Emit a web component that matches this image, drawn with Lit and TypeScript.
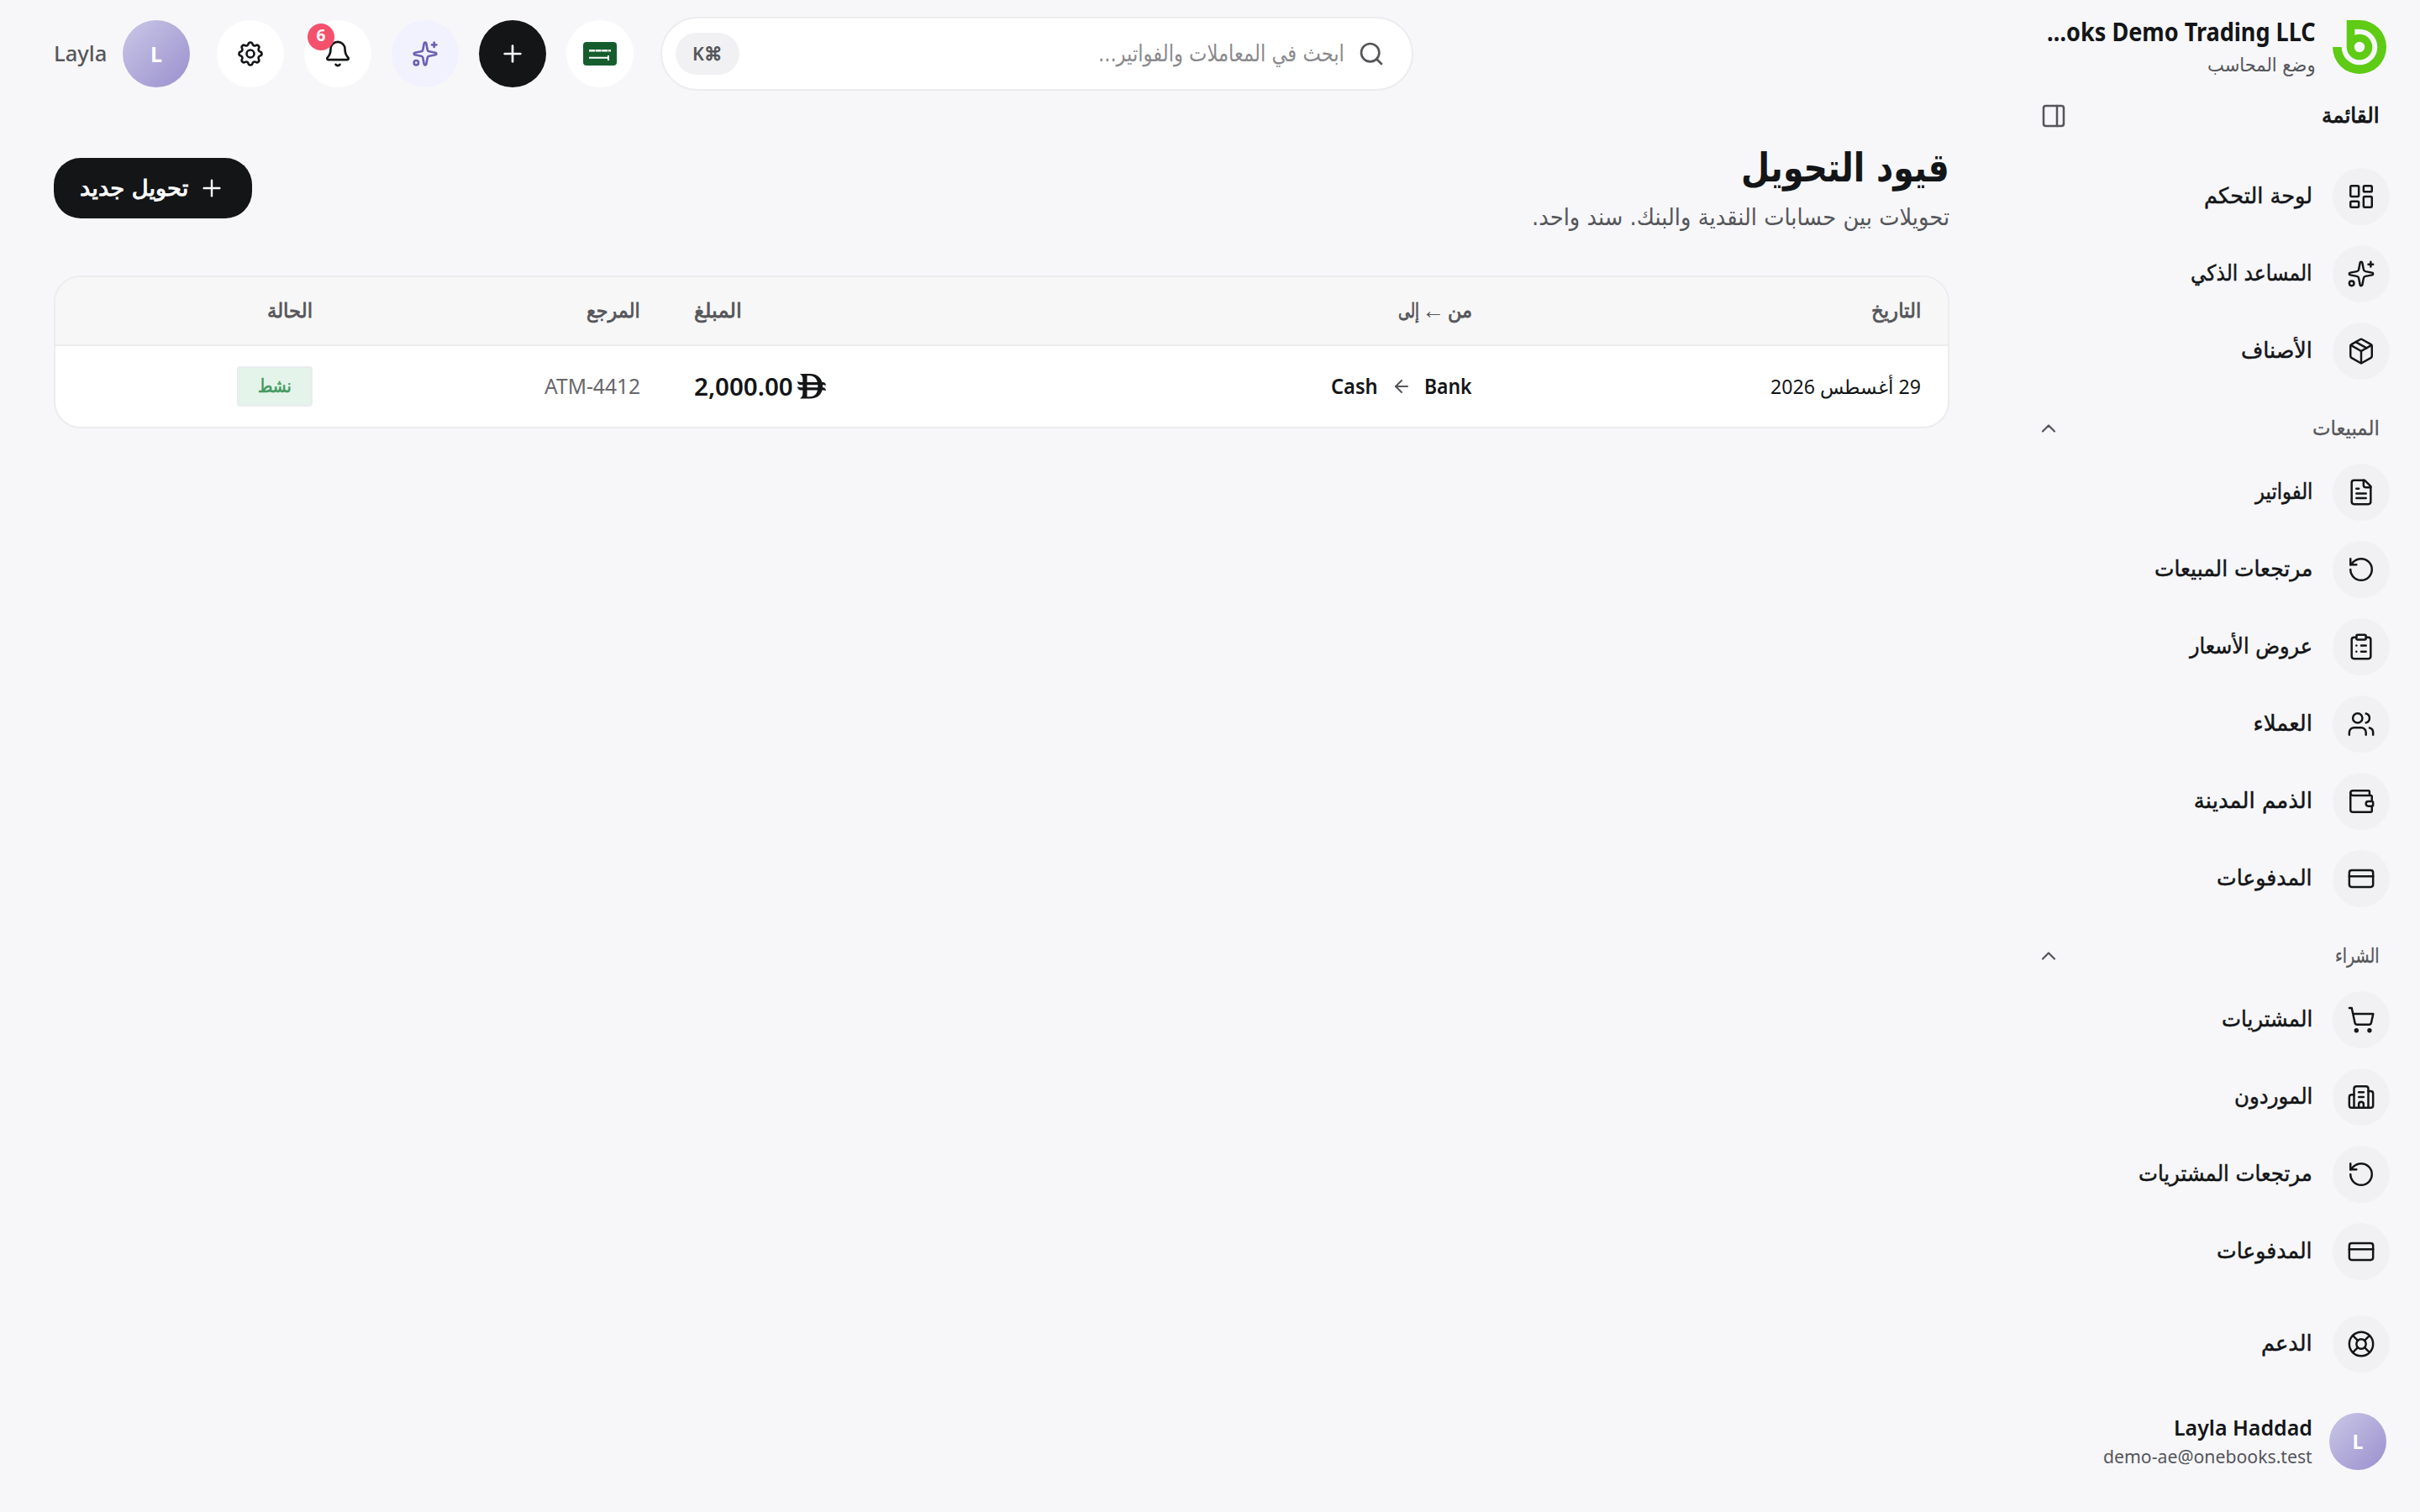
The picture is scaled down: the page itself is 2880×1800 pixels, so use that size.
import { LitElement, html, css, svg } from "lit";
import { customElement, property, query } from "lit/decorators.js";

const ICONS: Record<string, unknown> = {
  dashboard: svg`<rect x="3" y="3" width="7" height="9" rx="1"/><rect x="14" y="3" width="7" height="5" rx="1"/><rect x="14" y="12" width="7" height="9" rx="1"/><rect x="3" y="16" width="7" height="5" rx="1"/>`,
  sparkles: svg`<path d="M11.017 2.814a1 1 0 0 1 1.966 0l1.051 5.558a2 2 0 0 0 1.594 1.594l5.558 1.051a1 1 0 0 1 0 1.966l-5.558 1.051a2 2 0 0 0-1.594 1.594l-1.051 5.558a1 1 0 0 1-1.966 0l-1.051-5.558a2 2 0 0 0-1.594-1.594l-5.558-1.051a1 1 0 0 1 0-1.966l5.558-1.051a2 2 0 0 0 1.594-1.594z"/><path d="M20 2v4"/><path d="M22 4h-4"/><circle cx="4" cy="20" r="2"/>`,
  box: svg`<path d="M11 21.73a2 2 0 0 0 2 0l7-4A2 2 0 0 0 21 16V8a2 2 0 0 0-1-1.73l-7-4a2 2 0 0 0-2 0l-7 4A2 2 0 0 0 3 8v8a2 2 0 0 0 1 1.73z"/><path d="M12 22V12"/><path d="M3.29 7 12 12l8.71-5"/><path d="m7.5 4.27 9 5.15"/>`,
  file: svg`<path d="M15 2H6a2 2 0 0 0-2 2v16a2 2 0 0 0 2 2h12a2 2 0 0 0 2-2V7z"/><path d="M14 2v4a2 2 0 0 0 2 2h4"/><path d="M10 9H8"/><path d="M16 13H8"/><path d="M16 17H8"/>`,
  undo: svg`<path d="M3 12a9 9 0 1 0 9-9 9.75 9.75 0 0 0-6.74 2.74L3 8"/><path d="M3 3v5h5"/>`,
  clipboard: svg`<rect x="8" y="2" width="8" height="4" rx="1"/><path d="M16 4h2a2 2 0 0 1 2 2v14a2 2 0 0 1-2 2H6a2 2 0 0 1-2-2V6a2 2 0 0 1 2-2h2"/><path d="M12 11h4"/><path d="M12 16h4"/><path d="M8 11h.01"/><path d="M8 16h.01"/>`,
  users: svg`<path d="M16 21v-2a4 4 0 0 0-4-4H6a4 4 0 0 0-4 4v2"/><circle cx="9" cy="7" r="4"/><path d="M22 21v-2a4 4 0 0 0-3-3.87"/><path d="M16 3.13a4 4 0 0 1 0 7.75"/>`,
  wallet: svg`<path d="M19 7V4a1 1 0 0 0-1-1H5a2 2 0 0 0 0 4h15a1 1 0 0 1 1 1v4h-3a2 2 0 0 0 0 4h3a1 1 0 0 0 1-1v-2a1 1 0 0 0-1-1"/><path d="M3 5v14a2 2 0 0 0 2 2h15a1 1 0 0 0 1-1v-4"/>`,
  card: svg`<rect x="2" y="5" width="20" height="14" rx="2"/><path d="M2 10h20"/>`,
  cart: svg`<circle cx="8" cy="21" r="1"/><circle cx="19" cy="21" r="1"/><path d="M2.05 2.05h2l2.66 12.42a2 2 0 0 0 2 1.58h9.78a2 2 0 0 0 1.95-1.57l1.65-7.43H5.12"/>`,
  building: svg`<path d="M10 12h4"/><path d="M10 8h4"/><path d="M14 21v-3a2 2 0 0 0-4 0v3"/><path d="M6 10H4a2 2 0 0 0-2 2v7a2 2 0 0 0 2 2h16a2 2 0 0 0 2-2V9a2 2 0 0 0-2-2h-2"/><path d="M6 21V5a2 2 0 0 1 2-2h8a2 2 0 0 1 2 2v16"/>`,
  buoy: svg`<circle cx="12" cy="12" r="10"/><path d="m4.93 4.93 4.24 4.24"/><path d="m14.83 9.17 4.24-4.24"/><path d="m14.83 14.83 4.24 4.24"/><path d="m9.17 14.83-4.24 4.24"/><circle cx="12" cy="12" r="4"/>`,
  panel: svg`<rect x="3" y="3" width="18" height="18" rx="2"/><path d="M15 3v18"/>`,
  up: svg`<path d="m18 15-6-6-6 6"/>`,
  left: svg`<path d="m12 19-7-7 7-7"/><path d="M19 12H5"/>`,
  plus: svg`<path d="M5 12h14"/><path d="M12 5v14"/>`,
  search: svg`<circle cx="11" cy="11" r="8"/><path d="m21 21-4.34-4.34"/>`,
  bell: svg`<path d="M10.268 21a2 2 0 0 0 3.464 0"/><path d="M3.262 15.326A1 1 0 0 0 4 17h16a1 1 0 0 0 .74-1.673C19.41 13.956 18 12.499 18 8A6 6 0 0 0 6 8c0 4.499-1.411 5.956-2.738 7.326"/>`,
  gear: svg`<path d="M10.325 4.317c.426-1.756 2.924-1.756 3.35 0a1.724 1.724 0 0 0 2.573 1.066c1.543-.94 3.31.826 2.37 2.37a1.724 1.724 0 0 0 1.065 2.572c1.756.426 1.756 2.924 0 3.35a1.724 1.724 0 0 0-1.066 2.573c.94 1.543-.826 3.31-2.37 2.37a1.724 1.724 0 0 0-2.572 1.065c-.426 1.756-2.924 1.756-3.35 0a1.724 1.724 0 0 0-2.573-1.066c-1.543.94-3.31-.826-2.37-2.37a1.724 1.724 0 0 0-1.065-2.572c-1.756-.426-1.756-2.924 0-3.35a1.724 1.724 0 0 0 1.066-2.573c-.94-1.543.826-3.31 2.37-2.37 1 .608 2.296.07 2.572-1.065z"/><circle cx="12" cy="12" r="3"/>`,
};

const icon = (name: string, size = 34, stroke = 1.75) => html`<svg
  class="icon" width=${size} height=${size} viewBox="0 0 24 24" fill="none" stroke="currentColor"
  stroke-width=${stroke} stroke-linecap="round" stroke-linejoin="round">${ICONS[name]}</svg>`;

/** A single line of text condensed or widened to a given measure. */
@customElement("fit-text")
class FitText extends LitElement {
  @property({ type: Number }) w = 0;
  @property() text = "";
  @query(".line") line!: HTMLElement;

  static styles = css`
    :host { display: block; flex: none; white-space: nowrap; }
    .box { display: flex; justify-content: flex-start; }
    .line { flex: none; display: block; transform-origin: 100% 50%; }
  `;

  render() {
    return html`<div class="box" style="width:${this.w}px"><span class="line">${this.text}</span></div>`;
  }

  updated() {
    const natural = this.line.offsetWidth;
    if (natural) this.line.style.transform = `scaleX(${this.w / natural})`;
  }
}

const fit = (text: string, w: number, cls = "") =>
  html`<fit-text class=${cls} .text=${text} .w=${w}></fit-text>`;

type Item = [icon: string, label: string, width: number];

const MAIN: Item[] = [
  ["dashboard", "لوحة التحكم", 129],
  ["sparkles", "المساعد الذكي", 145],
  ["box", "الأصناف", 85],
];
const SALES: Item[] = [
  ["file", "الفواتير", 68],
  ["undo", "مرتجعات المبيعات", 188],
  ["clipboard", "عروض الأسعار", 146],
  ["users", "العملاء", 70],
  ["wallet", "الذمم المدينة", 141],
  ["card", "المدفوعات", 114],
];
const BUYING: Item[] = [
  ["cart", "المشتريات", 108],
  ["building", "الموردون", 93],
  ["undo", "مرتجعات المشتريات", 207],
  ["card", "المدفوعات", 114],
];

@customElement("app-root")
class AppRoot extends LitElement {
  static styles = css`
    :host {
      display: flex; direction: rtl; width: 2880px; height: 1800px; overflow: hidden;
      background: #f7f7fa; color: #131517; box-sizing: border-box;
      font-family: "DejaVu Sans", sans-serif; font-size: 26px; line-height: 36px;
    }
    * { box-sizing: border-box; }
    .icon { display: block; flex: none; }
    .latin { font-family: "Noto Sans", "Open Sans", sans-serif; }
    .muted { color: #56565a; }

    .sidebar { width: 496px; flex: none; padding: 24px 36px 0 0; display: flex; flex-direction: column; }
    .brand { display: flex; gap: 20px; padding-right: 4px; height: 64px; }
    .brand-text { margin-top: -4px; }
    .company { font-size: 29.5px; font-weight: 700; line-height: 36px; }
    .mode { font-size: 23px; line-height: 34px; margin-top: 4px; }
    .menu-head { display: flex; justify-content: space-between; align-items: center; height: 40px; margin-top: 30px; padding: 0 12px 0 44px; width: 460px; }
    .menu-title { font-size: 25px; -webkit-text-stroke: 0.9px currentColor; }
    .items { display: flex; flex-direction: column; gap: 24px; }
    .items.first { margin-top: 42px; }
    .item { display: flex; align-items: center; gap: 24px; height: 68px; -webkit-text-stroke: 0.5px currentColor; }
    .item fit-text { margin-top: -2px; }
    .bubble { width: 68px; height: 68px; flex: none; border-radius: 50%; background: #f1f1f3; display: flex; align-items: center; justify-content: center; }
    .section { display: flex; justify-content: space-between; align-items: center; height: 100px; padding: 16px 12px 0 40px; width: 460px; font-size: 24px; -webkit-text-stroke: 0.3px currentColor; }
    .support { margin-top: 42px; }
    .me { display: flex; gap: 20px; margin-top: 48px; padding-right: 4px; }
    .avatar { border-radius: 50%; background: linear-gradient(135deg, #cac7e7 0%, #9a90cd 100%); color: #fff; display: flex; align-items: center; justify-content: center; font-weight: 700; flex: none; font-size: 25px; padding-bottom: 1px; }
    .avatar.small { width: 68px; height: 68px; font-size: 23px; }
    .avatar.big { width: 80px; height: 80px; }
    .me-name { font-size: 26px; font-weight: 600; line-height: 34px; }
    .me-mail { font-size: 22.5px; line-height: 34px; margin-top: 1px; }

    .main { flex: 1; padding: 0 64px; }
    .topbar { height: 128px; display: flex; justify-content: flex-end; align-items: center; }
    .search { width: 896px; height: 88px; border: 2px solid #ececee; border-radius: 44px; background: #fff; display: flex; align-items: center; padding: 0 32px 0 16px; color: #8a8a8d; margin-left: 32px; font-size: 27px; }
    .search .icon { color: #555558; margin-left: 16px; }
    .key { margin-right: auto; width: 76px; height: 50px; border-radius: 25px; background: #f1f1f3; color: #56565a; display: flex; align-items: center; justify-content: center; font-size: 22px; font-weight: 600; padding-bottom: 2px; }
    .tools { display: flex; gap: 24px; }
    .tool { position: relative; width: 80px; height: 80px; border-radius: 50%; background: #fff; display: flex; align-items: center; justify-content: center; }
    .tool.lilac { background: #f2f1fe; color: #6d61b3; }
    .tool.dark { background: #131517; color: #fff; }
    .count { position: absolute; left: 4px; top: 4px; width: 32px; height: 32px; border-radius: 50%; background: #f4516c; color: #fff; font-size: 19px; font-weight: 700; line-height: 29px; text-align: center; }
    .user { display: flex; align-items: center; gap: 19px; margin-right: 32px; font-size: 26px; font-weight: 500; }
    .user fit-text { margin-top: -3px; }

    .heading { display: flex; justify-content: space-between; height: 200px; padding-top: 40px; }
    .title { font-size: 47px; font-weight: 700; line-height: 64px; }
    .subtitle { font-size: 28px; line-height: 40px; margin-top: 7px; }
    .create { display: flex; align-items: center; gap: 12px; width: 236px; height: 72px; margin-top: 20px; padding: 0 32px; border-radius: 32px; background: #131517; color: #fff; font-size: 26px; -webkit-text-stroke: 1px currentColor; }

    .table { border: 2px solid #ececef; border-radius: 32px; overflow: hidden; background: #fff; }
    .row { display: grid; grid-template-columns: 534px 690px 300px 390px 338px; align-items: center; }
    .row > div { padding: 0 32px; display: flex; align-items: center; }
    .row > .end { justify-content: flex-end; }
    .row.head { height: 82px; background: #f7f7f7; border-bottom: 2px solid #ececee; color: #56565a; font-size: 24px; -webkit-text-stroke: 0.8px currentColor; }
    .row .long { font-family: "Liberation Sans", sans-serif; font-size: 27px; -webkit-text-stroke: 0; margin: 0 4px 0 3px; }
    .row.body { height: 96px; }
    .date { font-size: 23px; }
    .strong { font-size: 24.5px; font-weight: 600; margin-top: -1px; }
    .row .arrow { padding: 0 15px 0 16px; color: #56565a; }
    .amount { font-size: 28px; font-weight: 600; margin-top: -1px; }
    .ref { font-size: 25px; color: #67676b; margin-top: -2px; }
    .money { display: flex; align-items: center; gap: 5px; }
    .status { width: 90px; height: 48px; border: 2px solid #e9ecef; border-radius: 4px; background: #e4f4ea; color: #459a60; font-size: 22px; -webkit-text-stroke: 0.7px currentColor; display: flex; align-items: center; justify-content: center; }
  `;

  private item([name, label, w]: Item) {
    return html`<div class="item"><div class="bubble">${icon(name)}</div>${fit(label, w)}</div>`;
  }

  private section(label: string, w: number) {
    return html`<div class="section muted">${fit(label, w)}${icon("up", 28, 1.9)}</div>`;
  }

  render() {
    return html`
      <aside class="sidebar">
        <div class="brand">
          <svg width="64" height="64" viewBox="0 0 64 64" fill="#5ecb14" class="icon">
            <path fill-rule="evenodd" d="M0 32A32 32 0 1 0 32 0H16.7V32A15.3 15.3 0 1 0 26.3 17.8V10.7H32A21.3 21.3 0 1 1 10.7 32ZM38.2 32A6.2 6.2 0 1 1 25.8 32A6.2 6.2 0 1 1 38.2 32Z"/>
          </svg>
          <div class="brand-text">
            ${fit("\u202A…oks Demo Trading LLC\u202C", 320, "company latin")}
            ${fit("وضع المحاسب", 129, "mode muted")}
          </div>
        </div>
        <div class="menu-head">${fit("القائمة", 69, "menu-title")}<span class="muted">${icon("panel", 32, 1.9)}</span></div>
        <nav class="items first">${MAIN.map((i) => this.item(i))}</nav>
        ${this.section("المبيعات", 80)}
        <nav class="items">${SALES.map((i) => this.item(i))}</nav>
        ${this.section("الشراء", 53)}
        <nav class="items">${BUYING.map((i) => this.item(i))}</nav>
        <div class="support">${this.item(["buoy", "الدعم", 61])}</div>
        <div class="me">
          <div class="avatar small latin">L</div>
          <div>
            ${fit("Layla Haddad", 165, "me-name latin")}
            ${fit("demo-ae@onebooks.test", 249, "me-mail latin muted")}
          </div>
        </div>
      </aside>

      <main class="main">
        <header class="topbar">
          <div class="search">
            ${icon("search", 32, 2)}${fit("ابحث في المعاملات والفواتير...", 293)}
            <div class="key latin">${fit("\u202AK⌘\u202C", 35)}</div>
          </div>
          <div class="tools">
            <div class="tool">
              <svg class="icon" width="40" height="28" viewBox="0 0 40 28">
                <rect width="40" height="28" rx="4" fill="#165d2e"/>
                <path d="M7 10.2H33" stroke="#fff" stroke-width="2.6" stroke-dasharray="7 .6"/>
                <path d="M7 18.8H30M30 16V22" stroke="#fff" stroke-width="2"/>
              </svg>
            </div>
            <div class="tool dark">${icon("plus", 32, 2)}</div>
            <div class="tool lilac">${icon("sparkles", 32, 2)}</div>
            <div class="tool">${icon("bell", 34, 1.85)}<span class="count latin">6</span></div>
            <div class="tool">${icon("gear", 36, 1.75)}</div>
          </div>
          <div class="user">
            <div class="avatar big latin">L</div>
            ${fit("Layla", 63, "latin muted")}
          </div>
        </header>

        <div class="heading">
          <div>
            ${fit("قيود التحويل", 248, "title")}
            ${fit("تحويلات بين حسابات النقدية والبنك. سند واحد.", 497, "subtitle muted")}
          </div>
          <div class="create">${icon("plus", 32, 1.8)}${fit("تحويل جديد", 129)}</div>
        </div>

        <section class="table">
          <div class="row head">
            <div>${fit("التاريخ", 59)}</div>
            <div>${fit("من", 29)}<span class="long">←</span>${fit("إلى", 25)}</div>
            <div class="end">${fit("المبلغ", 57)}</div>
            <div>${fit("المرجع", 64)}</div>
            <div>${fit("الحالة", 54)}</div>
          </div>
          <div class="row body">
            <div>${fit("29 أغسطس 2026", 179, "date latin")}</div>
            <div>
              ${fit("Bank", 57, "strong latin")}
              <span class="arrow">${icon("left", 24, 2)}</span>
              ${fit("Cash", 56, "strong latin")}
            </div>
            <div class="end">
              <div class="money">
                <svg class="icon" width="34" height="30" viewBox="0 0 34 30" fill="#131517">
                  <path fill-rule="evenodd" d="M3 0H15C24 0 30 5.5 30 15S24 29.5 15 29.5H3C5.5 27.5 6.3 26 6.3 23V6.500C6.300 3.500 5.500 2 3 0ZM11.500 2.200V27.300H14.500C21 27.300 24.300 23 24.300 15S21 2.200 14.500 2.200Z"/>
                  <path d="M0 8.600C1 9.700 2 10 3.500 10H30.500C32.500 10 33.500 11 34 14C33 13.300 32 13.200 30.500 13.200H3.500C1.200 13.200 .2 11.700 0 8.600ZM0 14.800C1 15.900 2 16.200 3.500 16.200H30.500C32.500 16.200 33.500 17.200 34 20.200C33 19.500 32 19.400 30.500 19.400H3.500C1.200 19.400 .2 17.900 0 14.800Z"/>
                </svg>
                ${fit("2,000.00", 118, "amount latin")}
              </div>
            </div>
            <div>${fit("ATM-4412", 114, "ref latin")}</div>
            <div><div class="status">${fit("نشط", 40)}</div></div>
          </div>
        </section>
      </main>
    `;
  }
}
